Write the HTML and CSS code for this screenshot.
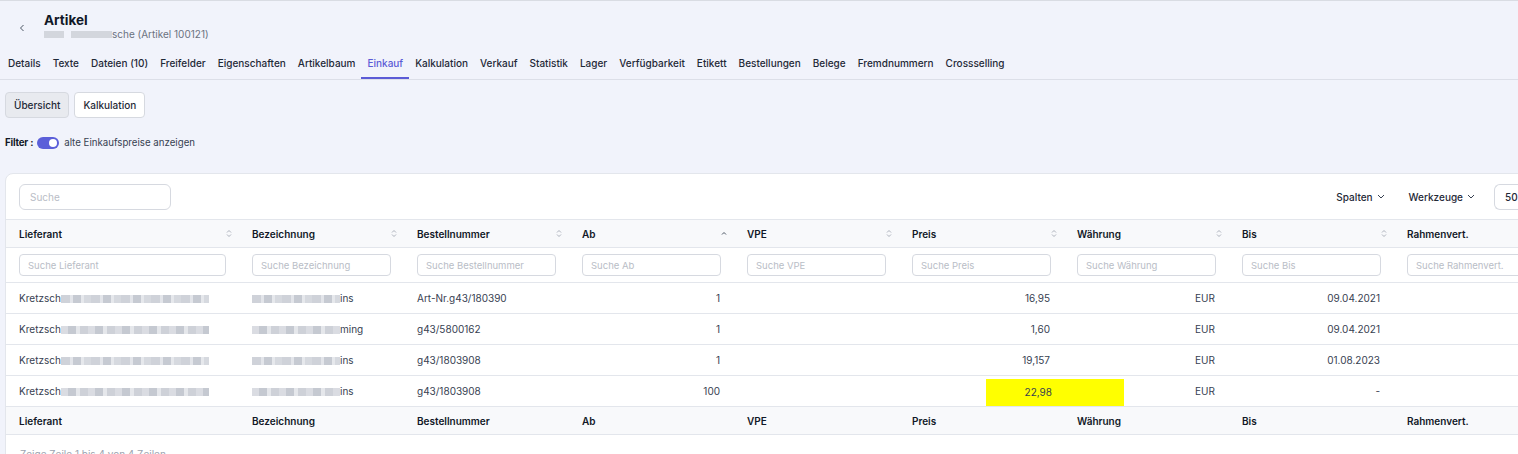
FILE: index.html
```html
<!DOCTYPE html>
<html lang="de">
<head>
    <meta charset="UTF-8">
    <title>Artikel - Einkauf</title>
    <link rel="stylesheet" href="styles.css">
</head>
<body>
    <div class="page-header">
        <span class="back">
            <svg width="8" height="8" viewBox="0 0 8 8"><path d="M5.5 1 L2.5 4 L5.5 7" fill="none" stroke="#4b5563" stroke-width="1"/></svg>
        </span>
        <div class="title-block">
            <h1>Artikel</h1>
            <div class="subtitle"><span class="blur blur-sub"></span>sche (Artikel 100121)</div>
        </div>
    </div>

    <nav class="tabs">
        <a class="tab">Details</a>
        <a class="tab">Texte</a>
        <a class="tab">Dateien (10)</a>
        <a class="tab">Freifelder</a>
        <a class="tab">Eigenschaften</a>
        <a class="tab">Artikelbaum</a>
        <a class="tab active">Einkauf</a>
        <a class="tab">Kalkulation</a>
        <a class="tab">Verkauf</a>
        <a class="tab">Statistik</a>
        <a class="tab">Lager</a>
        <a class="tab">Verfügbarkeit</a>
        <a class="tab">Etikett</a>
        <a class="tab">Bestellungen</a>
        <a class="tab">Belege</a>
        <a class="tab">Fremdnummern</a>
        <a class="tab">Crossselling</a>
    </nav>

    <div class="subnav">
        <button class="btn btn-active">Übersicht</button>
        <button class="btn">Kalkulation</button>
    </div>

    <div class="filter">
        <span class="filter-label">Filter :</span>
        <span class="toggle"><span class="knob"></span></span>
        <span>alte Einkaufspreise anzeigen</span>
    </div>

    <div class="card">
        <div class="toolbar">
            <input class="search" placeholder="Suche">
            <div class="tools">
                <span class="tool">Spalten <svg width="8" height="5" viewBox="0 0 8 5"><path d="M1 1 L4 4 L7 1" fill="none" stroke="#374151" stroke-width="1"/></svg></span>
                <span class="tool">Werkzeuge <svg width="8" height="5" viewBox="0 0 8 5"><path d="M1 1 L4 4 L7 1" fill="none" stroke="#374151" stroke-width="1"/></svg></span>
                <span class="page-size">50</span>
            </div>
        </div>

        <table class="grid">
            <colgroup>
                <col style="width: 233px">
                <col style="width: 165px">
                <col style="width: 165px">
                <col style="width: 165px">
                <col style="width: 165px">
                <col style="width: 165px">
                <col style="width: 165px">
                <col style="width: 165px">
                <col style="width: 165px">
            </colgroup>
            <thead>
                <tr class="head">
                    <th><div class="th">Lieferant <span class="sort"><svg width="6" height="9" viewBox="0 0 6 9"><path d="M1 3.5 L3 1.5 L5 3.5 M1 5.5 L3 7.5 L5 5.5" fill="none" stroke="#a3a8b3" stroke-width="0.9"/></svg></span></div></th>
                    <th><div class="th">Bezeichnung <span class="sort"><svg width="6" height="9" viewBox="0 0 6 9"><path d="M1 3.5 L3 1.5 L5 3.5 M1 5.5 L3 7.5 L5 5.5" fill="none" stroke="#a3a8b3" stroke-width="0.9"/></svg></span></div></th>
                    <th><div class="th">Bestellnummer <span class="sort"><svg width="6" height="9" viewBox="0 0 6 9"><path d="M1 3.5 L3 1.5 L5 3.5 M1 5.5 L3 7.5 L5 5.5" fill="none" stroke="#a3a8b3" stroke-width="0.9"/></svg></span></div></th>
                    <th><div class="th">Ab <span class="sort"><svg width="6" height="9" viewBox="0 0 6 9"><path d="M1 5.5 L3 3.5 L5 5.5" fill="none" stroke="#4b5563" stroke-width="1"/></svg></span></div></th>
                    <th><div class="th">VPE <span class="sort"><svg width="6" height="9" viewBox="0 0 6 9"><path d="M1 3.5 L3 1.5 L5 3.5 M1 5.5 L3 7.5 L5 5.5" fill="none" stroke="#a3a8b3" stroke-width="0.9"/></svg></span></div></th>
                    <th><div class="th">Preis <span class="sort"><svg width="6" height="9" viewBox="0 0 6 9"><path d="M1 3.5 L3 1.5 L5 3.5 M1 5.5 L3 7.5 L5 5.5" fill="none" stroke="#a3a8b3" stroke-width="0.9"/></svg></span></div></th>
                    <th><div class="th">Währung <span class="sort"><svg width="6" height="9" viewBox="0 0 6 9"><path d="M1 3.5 L3 1.5 L5 3.5 M1 5.5 L3 7.5 L5 5.5" fill="none" stroke="#a3a8b3" stroke-width="0.9"/></svg></span></div></th>
                    <th><div class="th">Bis <span class="sort"><svg width="6" height="9" viewBox="0 0 6 9"><path d="M1 3.5 L3 1.5 L5 3.5 M1 5.5 L3 7.5 L5 5.5" fill="none" stroke="#a3a8b3" stroke-width="0.9"/></svg></span></div></th>
                    <th><div class="th">Rahmenvert.</div></th>
                </tr>
                <tr class="filters">
                    <td><input class="col-search" placeholder="Suche Lieferant"></td>
                    <td><input class="col-search" placeholder="Suche Bezeichnung"></td>
                    <td><input class="col-search" placeholder="Suche Bestellnummer"></td>
                    <td><input class="col-search" placeholder="Suche Ab"></td>
                    <td><input class="col-search" placeholder="Suche VPE"></td>
                    <td><input class="col-search" placeholder="Suche Preis"></td>
                    <td><input class="col-search" placeholder="Suche Währung"></td>
                    <td><input class="col-search" placeholder="Suche Bis"></td>
                    <td><input class="col-search" placeholder="Suche Rahmenvert."></td>
                </tr>
            </thead>
            <tbody>
                <tr>
                    <td>Kretzsch<span class="blur blur-a"></span></td>
                    <td><span class="blur blur-b"></span>ins</td>
                    <td>Art-Nr.g43/180390</td>
                    <td class="num">1</td>
                    <td></td>
                    <td class="num">16,95</td>
                    <td class="num">EUR</td>
                    <td class="num">09.04.2021</td>
                    <td></td>
                </tr>
                <tr>
                    <td>Kretzsch<span class="blur blur-a alt"></span></td>
                    <td><span class="blur blur-b alt"></span>ming</td>
                    <td>g43/5800162</td>
                    <td class="num">1</td>
                    <td></td>
                    <td class="num">1,60</td>
                    <td class="num">EUR</td>
                    <td class="num">09.04.2021</td>
                    <td></td>
                </tr>
                <tr>
                    <td>Kretzsch<span class="blur blur-a"></span></td>
                    <td><span class="blur blur-b"></span>ins</td>
                    <td>g43/1803908</td>
                    <td class="num">1</td>
                    <td></td>
                    <td class="num">19,157</td>
                    <td class="num">EUR</td>
                    <td class="num">01.08.2023</td>
                    <td></td>
                </tr>
                <tr>
                    <td>Kretzsch<span class="blur blur-a alt"></span></td>
                    <td><span class="blur blur-b alt"></span>ins</td>
                    <td>g43/1803908</td>
                    <td class="num">100</td>
                    <td></td>
                    <td class="num"><span class="marked">22,98</span></td>
                    <td class="num">EUR</td>
                    <td class="num">-</td>
                    <td></td>
                </tr>
            </tbody>
            <tfoot>
                <tr class="foot">
                    <th>Lieferant</th>
                    <th>Bezeichnung</th>
                    <th>Bestellnummer</th>
                    <th>Ab</th>
                    <th>VPE</th>
                    <th>Preis</th>
                    <th>Währung</th>
                    <th>Bis</th>
                    <th>Rahmenvert.</th>
                </tr>
            </tfoot>
        </table>
        <div class="info">Zeige Zeile 1 bis 4 von 4 Zeilen</div>
    </div>
</body>
</html>
```

FILE: styles.css
```css
* {
    margin: 0;
    padding: 0;
    box-sizing: border-box;
}

body {
    font-family: Inter, 'Noto Sans', sans-serif;
    font-size: 10px;
    color: #1f2937;
    background: #f1f3fb;
    border-top: 1px solid #d9dce3;
    overflow: hidden;
    height: 454px;
}

.page-header {
    display: flex;
    align-items: flex-start;
    height: 49px;
    padding-top: 11px;
}

.back {
    width: 44px;
    display: flex;
    justify-content: center;
    padding-top: 12px;
}

.title-block h1 {
    font-size: 13.5px;
    font-weight: 700;
    color: #111827;
    line-height: 16px;
}

.subtitle {
    font-size: 10px;
    color: #6b7280;
    line-height: 13px;
    display: flex;
    align-items: center;
}

.blur {
    display: inline-block;
    vertical-align: middle;
    background:
        repeating-linear-gradient(90deg, #cfd2d9 0 9px, #e3e5ea 9px 12px, #c6cad2 12px 20px, #e6e8ec 20px 23px, #d6d9df 23px 30px);
}

.blur-sub {
    width: 68px;
    height: 7px;
    background:
        linear-gradient(90deg, #d3d6dd 0 20px, transparent 20px 27px, #d3d6dd 27px 68px);
}

.blur-a {
    width: 148px;
    height: 8px;
}

.blur-b {
    width: 88px;
    height: 8px;
}

.blur.alt {
    background:
        repeating-linear-gradient(90deg, #dadce2 0 7px, #c5c9d1 7px 15px, #e5e7eb 15px 19px, #ced1d8 19px 27px);
}

.tabs {
    display: flex;
    padding-left: 2px;
    border-bottom: 1px solid #dcdfe8;
    height: 30px;
}

.tab {
    padding: 2px 6px 0;
    font-weight: 500;
    color: #1f2937;
    line-height: 23px;
    border-bottom: 2px solid transparent;
}

.tab.active {
    color: #5b5bd6;
    border-bottom-color: #5b5bd6;
}

.subnav {
    display: flex;
    gap: 5px;
    padding: 12px 5px 0;
}

.btn {
    font-family: inherit;
    font-size: 10px;
    font-weight: 500;
    color: #1f2937;
    background: #fff;
    border: 1px solid #d6d9e0;
    border-radius: 4px;
    height: 26px;
    padding: 0 8px;
}

.btn-active {
    background: #e8eaef;
}

.filter {
    display: flex;
    align-items: center;
    gap: 4px;
    padding: 14px 5px 0;
    height: 35px;
    font-size: 9.7px;
    color: #374151;
}

.filter-label {
    font-weight: 700;
    color: #111827;
    letter-spacing: -0.2px;
}

.toggle {
    width: 22px;
    height: 12px;
    border-radius: 6px;
    background: #5b5fd9;
    display: flex;
    align-items: center;
    justify-content: flex-end;
    padding-right: 2px;
    margin-right: 1px;
}

.knob {
    width: 8px;
    height: 8px;
    border-radius: 50%;
    background: #fff;
}

.card {
    margin: 20px 0 0 5px;
    width: 1560px;
    background: #fff;
    border: 1px solid #e3e6ec;
    border-radius: 8px 0 0 0;
}

.toolbar {
    display: flex;
    align-items: center;
    justify-content: space-between;
    height: 45px;
    padding: 0 0 0 13px;
}

.search {
    width: 152px;
    height: 26px;
    border: 1px solid #d6d9e0;
    border-radius: 6px;
    padding: 0 10px;
    font-family: inherit;
    font-size: 10px;
}

.search::placeholder,
.col-search::placeholder {
    color: #b9bdc6;
}

.tools {
    display: flex;
    align-items: center;
    margin-right: 10px;
}

.tool {
    display: flex;
    align-items: center;
    gap: 4px;
    font-weight: 500;
    color: #1f2937;
    margin-right: 24px;
}

.tool + .tool {
    margin-right: 19px;
}

.page-size {
    width: 60px;
    height: 26px;
    border: 1px solid #d6d9e0;
    border-radius: 6px 0 0 6px;
    border-right: none;
    display: flex;
    align-items: center;
    padding-left: 10px;
    font-weight: 500;
}

.grid {
    table-layout: fixed;
    border-collapse: collapse;
    width: 1553px;
}

.grid th,
.grid td {
    padding: 0 14px 0 13px;
    text-align: left;
    white-space: nowrap;
}

.head th,
.foot th {
    height: 28px;
    background: #f8f9fb;
    font-weight: 600;
    color: #111827;
    border-top: 1px solid #e3e6ec;
    border-bottom: 1px solid #e3e6ec;
}

.head th {
    padding-right: 7px;
}

.th {
    display: flex;
    align-items: center;
    justify-content: space-between;
}

.sort {
    display: flex;
    width: 6px;
}

.filters td {
    height: 35px;
    padding-right: 13px;
    border-bottom: 1px solid #e3e6ec;
}

.col-search {
    width: 100%;
    height: 22px;
    border: 1px solid #d6d9e0;
    border-radius: 4px;
    padding: 0 8px;
    font-family: inherit;
    font-size: 9.5px;
}

tbody td {
    height: 31px;
    color: #374151;
    border-bottom: 1px solid #e3e6ec;
}

.grid td.num {
    text-align: right;
}

.marked {
    display: block;
    background: #ffff00;
    margin: 2px -74px 0 74px;
    padding-right: 72px;
    line-height: 27px;
}

.info {
    padding: 13px 0 0 14px;
    color: #9ca3af;
}
```
